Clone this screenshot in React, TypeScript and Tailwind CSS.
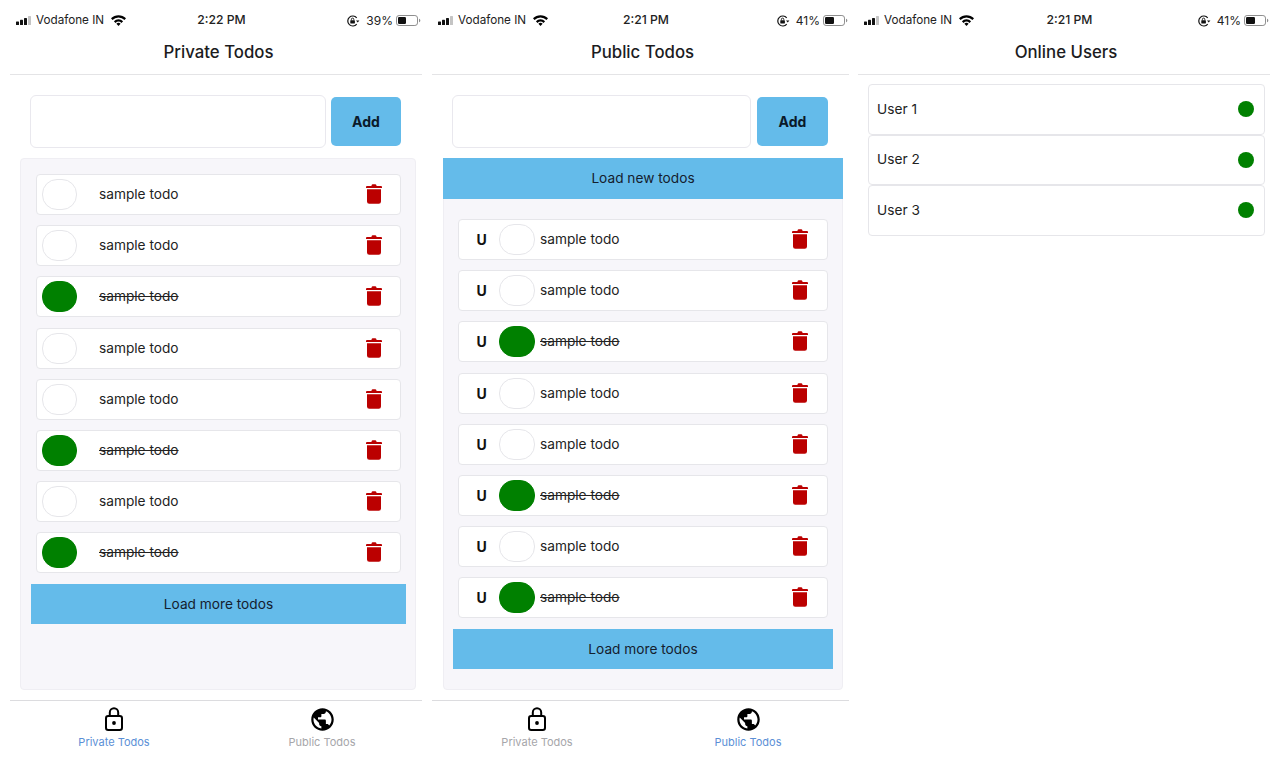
import { MdPublic } from 'react-icons/md';

function SignalIcon() {
    return (
        <svg width="16" height="9" viewBox="0 0 16 9" className="shrink-0">
            <rect x="0" y="5.5" width="3" height="3.5" rx="0.6" fill="#111" />
            <rect x="4" y="3.8" width="3" height="5.2" rx="0.6" fill="#111" />
            <rect x="8" y="2" width="3" height="7" rx="0.6" fill="#111" />
            <rect x="12" y="0" width="3" height="9" rx="0.6" fill="#c4c4c4" />
        </svg>
    );
}

function WifiIcon() {
    return (
        <svg width="15" height="11" viewBox="0 0 15 11" className="shrink-0">
            <path d="M0 3.3a10.6 10.6 0 0 1 15 0l-1.5 1.7a8.4 8.4 0 0 0-12 0z" fill="#000" />
            <path d="M2.9 6.2a6.5 6.5 0 0 1 9.2 0l-1.6 1.7a4.3 4.3 0 0 0-6 0z" fill="#000" />
            <path d="M5.4 8.7a3 3 0 0 1 4.2 0l-2.1 2.2z" fill="#000" />
        </svg>
    );
}

function RotationLockIcon() {
    return (
        <svg width="13" height="12" viewBox="0 0 13 12" className="shrink-0">
            <path d="M9.7 2.9A5 5 0 1 0 9.7 9.1" fill="none" stroke="#111" strokeWidth="1.2" />
            <path d="M9 5.4h3.4l-1.7 2.1z" fill="#111" />
            <rect x="3.3" y="5.3" width="4.6" height="3.2" rx="0.4" fill="#111" />
            <path d="M4.4 5.3V4.3a1.2 1.2 0 0 1 2.4 0v1" fill="none" stroke="#111" strokeWidth="0.9" />
        </svg>
    );
}

function BatteryIcon({ level }: { level: number }) {
    return (
        <svg width="25" height="11" viewBox="0 0 25 11" className="shrink-0">
            <rect x="0.5" y="0.5" width="21" height="10" rx="2.6" fill="none" stroke="#8e8e8e" strokeWidth="1" />
            <rect x="2" y="2" width={level} height="7" rx="1.2" fill="#111" />
            <path d="M23 3.8c1 0.3 1.3 1 1.3 1.7s-0.3 1.4-1.3 1.7z" fill="#8e8e8e" />
        </svg>
    );
}

function TrashIcon() {
    return (
        <svg width="16" height="20" viewBox="0 0 16 20" className="shrink-0">
            <path d="M5.6 1.3Q5.8 0.3 6.8 0.3h2.4q1 0 1.2 1l0.2 0.7H15q1 0 1 1v1H0V3q0-1 1-1h4.4z" fill="#bb0000" />
            <path d="M1 5.2h14V17.4q0 2.3-2.3 2.3H3.3Q1 19.7 1 17.4z" fill="#bb0000" />
        </svg>
    );
}

function LockIcon() {
    return (
        <svg width="20" height="24" viewBox="0 0 20 24">
            <rect x="2" y="9" width="16" height="14" rx="2.2" fill="none" stroke="#000" strokeWidth="2" />
            <path d="M5.8 9V5.4a4.2 4.2 0 0 1 8.4 0V9" fill="none" stroke="#000" strokeWidth="2" />
            <circle cx="10" cy="16" r="1.9" fill="#000" />
        </svg>
    );
}

function StatusBar({ time, battery, level }: { time: string; battery: string; level: number }) {
    return (
        <div className="h-[32px] flex items-center justify-between pl-[6px] pr-[1px] pt-[9px] text-[#222]">
            <div className="flex items-center gap-[4px] w-[136px] text-[11.7px]">
                <SignalIcon />
                <span>Vodafone IN</span>
                <span className="ml-[3px]"><WifiIcon /></span>
            </div>
            <span className="font-medium text-[12.2px]">{time}</span>
            <div className="flex items-center justify-end gap-[6px] w-[130px] text-[12px]">
                <RotationLockIcon />
                <div className="flex items-center gap-[3px]">
                    <span>{battery}</span>
                    <BatteryIcon level={level} />
                </div>
            </div>
        </div>
    );
}

function Header({ title, padClass }: { title: string; padClass: string }) {
    return (
        <div className={`h-[43px] flex items-center justify-center border-b border-[#e4e4e6] text-[16.8px] font-medium text-[#1c1c1e] ${padClass}`}>
            {title}
        </div>
    );
}

function AddForm({ inputClass, buttonClass }: { inputClass: string; buttonClass: string }) {
    return (
        <div className="flex items-center h-[53px] mt-[20px] pl-[20px]">
            <div className={`h-[53px] bg-white border border-[#e9e8ee] rounded-[6px] ${inputClass}`} />
            <button className={`h-[49px] bg-[#64bbea] rounded-[5px] text-[14px] font-bold text-[#0b1a2a] pb-[1px] ${buttonClass}`}>
                Add
            </button>
        </div>
    );
}

function Toggle({ done, className }: { done: boolean; className: string }) {
    return (
        <div
            className={`h-[31px] rounded-[15px] shrink-0 border ${
                done ? 'bg-[#008000] border-[#008000]' : 'bg-white border-[#e6e6ea]'
            } ${className}`}
        />
    );
}

function TodoText({ done, className }: { done: boolean; className: string }) {
    return (
        <span className={`text-[13.7px] text-[#222] pb-[0.5px] ${done ? 'line-through' : ''} ${className}`}>
            sample todo
        </span>
    );
}

const todos = [false, false, true, false, false, true, false, true];

function PrivateRow({ done, first }: { done: boolean; first: boolean }) {
    return (
        <div className={`h-[41px] bg-white border border-[#e6e6ea] rounded-[4px] flex items-center ml-[15px] mr-[14px] pl-[5px] ${first ? 'mt-[15px]' : 'mt-[10.2px]'}`}>
            <Toggle done={done} className="w-[35px]" />
            <TodoText done={done} className="ml-[22px]" />
            <div className="ml-auto mr-[18px] mb-[1px]"><TrashIcon /></div>
        </div>
    );
}

function PublicRow({ done, first }: { done: boolean; first: boolean }) {
    return (
        <div className={`h-[41px] bg-white border border-[#e6e6ea] rounded-[4px] flex items-center mx-[14px] ${first ? 'mt-[20px]' : 'mt-[10.2px]'}`}>
            <span className="w-[40px] pl-[5px] text-center text-[14px] font-bold text-[#111]">U</span>
            <Toggle done={done} className="w-[36px]" />
            <TodoText done={done} className="ml-[5px]" />
            <div className="ml-auto mr-[19px] mb-[1px]"><TrashIcon /></div>
        </div>
    );
}

function LoadButton({ label, className }: { label: string; className: string }) {
    return (
        <div className={`h-[40px] bg-[#64bbea] flex items-center justify-center text-[13.7px] text-[#14202e] ${className}`}>
            {label}
        </div>
    );
}

function TabBar({ active, leftClass, rightClass }: { active: 'private' | 'public'; leftClass: string; rightClass: string }) {
    const on = 'text-[#5b8fd6]';
    const off = 'text-[#a6a6aa]';
    return (
        <div className="h-[60px] border-t border-[#dcdcdf] flex">
            <div className={`w-[200px] flex flex-col items-center pt-[6px] ${leftClass}`}>
                <div className="h-[24px] flex items-center"><LockIcon /></div>
                <span className={`text-[11px] mt-[3px] ${active === 'private' ? on : off}`}>Private Todos</span>
            </div>
            <div className={`w-[200px] flex flex-col items-center pt-[6px] ${rightClass}`}>
                <div className="h-[24px] flex items-center"><MdPublic size={27} color="#000" /></div>
                <span className={`text-[11px] mt-[3px] ${active === 'public' ? on : off}`}>Public Todos</span>
            </div>
        </div>
    );
}

function PrivateScreen() {
    return (
        <div className="w-[412px] ml-[10px] flex flex-col h-full">
            <StatusBar time="2:22 PM" battery="39%" level={8} />
            <Header title="Private Todos" padClass="pl-[5px]" />
            <AddForm inputClass="w-[296px]" buttonClass="w-[70px] ml-[5px]" />
            <div className="mt-[10px] ml-[10px] w-[396px] h-[532px] bg-[#f7f6fa] border border-[#efeef3] rounded-[4px] flex flex-col">
                {todos.map((done, i) => (
                    <PrivateRow key={i} done={done} first={i === 0} />
                ))}
                <LoadButton label="Load more todos" className="mt-[10.5px] ml-[10px] mr-[9px]" />
            </div>
            <div className="mt-[10px]">
                <TabBar active="private" leftClass="ml-[4px]" rightClass="ml-[8px]" />
            </div>
        </div>
    );
}

function PublicScreen() {
    return (
        <div className="w-[417px] ml-[10px] flex flex-col h-full">
            <StatusBar time="2:21 PM" battery="41%" level={9} />
            <Header title="Public Todos" padClass="pl-[4px]" />
            <AddForm inputClass="w-[299px]" buttonClass="w-[71px] ml-[6px]" />
            <div className="mt-[10px] ml-[11px] w-[400px] h-[532px] bg-[#f7f6fa] border border-[#efeef3] rounded-[4px] flex flex-col">
                <LoadButton label="Load new todos" className="h-[41px] -mx-px -mt-px" />
                {todos.map((done, i) => (
                    <PublicRow key={i} done={done} first={i === 0} />
                ))}
                <LoadButton label="Load more todos" className="mt-[10.5px] mx-[9px]" />
            </div>
            <div className="mt-[10px]">
                <TabBar active="public" leftClass="ml-[5px]" rightClass="ml-[11px]" />
            </div>
        </div>
    );
}

function OnlineScreen() {
    return (
        <div className="w-[412px] ml-[9px] flex flex-col h-full">
            <StatusBar time="2:21 PM" battery="41%" level={9} />
            <Header title="Online Users" padClass="pl-[4px]" />
            <div className="mt-[9px] ml-[10px] mr-[5.5px] flex flex-col">
                {['User 1', 'User 2', 'User 3'].map(name => (
                    <div key={name} className="h-[50.5px] bg-white border border-[#e6e6ea] rounded-[4px] flex items-center justify-between pl-[8px] pr-[9.5px] text-[13.7px] text-[#222]">
                        {name}
                        <div className="w-[16px] h-[16px] rounded-full bg-[#008000]" />
                    </div>
                ))}
            </div>
        </div>
    );
}

export default function App() {
    return (
        <div className="w-[1280px] h-[760px] bg-white flex overflow-hidden font-['Inter',sans-serif]">
            <PrivateScreen />
            <PublicScreen />
            <OnlineScreen />
        </div>
    );
}
